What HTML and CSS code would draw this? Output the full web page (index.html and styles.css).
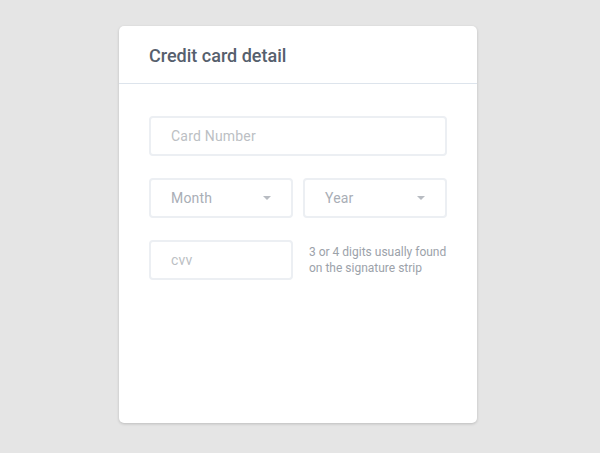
FILE: index.html
```html
<!DOCTYPE html>
<html>
<head>
<meta charset="utf-8">
<link rel="stylesheet" href="styles.css">
</head>
<body>
<div class="card">
  <div class="card-header">Credit card detail</div>
  <div class="card-body">
    <div class="field full light">Card Number</div>
    <div class="row">
      <div class="field select">Month<span class="caret"></span></div>
      <div class="field select">Year<span class="caret"></span></div>
    </div>
    <div class="row cvv-row">
      <div class="field half light">cvv</div>
      <div class="hint">3 or 4 digits usually found<br>on the signature strip</div>
    </div>
  </div>
</div>
</body>
</html>
```
FILE: styles.css
```css
html, body {
  margin: 0;
  padding: 0;
  background: #e5e5e5;
  font-family: Roboto, "Liberation Sans", sans-serif;
}
body {
  padding-top: 26px;
  height: 453px;
  box-sizing: border-box;
}
.card {
  width: 358px;
  height: 397px;
  margin: 0 auto 0 119px;
  background: #fff;
  border-radius: 5px;
  box-shadow: 0 1px 3px rgba(0,0,0,0.18);
  box-sizing: border-box;
}
.card-header {
  height: 58px;
  box-sizing: border-box;
  border-bottom: 1px solid #dde4ec;
  padding: 19px 30px 0;
  font-size: 18px;
  font-weight: 500;
  color: #56606d;
  line-height: 22px;
}
.card-body {
  padding: 32px 30px 0;
  display: flex;
  flex-direction: column;
  gap: 22px;
}
.field {
  height: 40px;
  box-sizing: border-box;
  border: 2px solid #eceff3;
  border-radius: 4px;
  padding: 0 20px;
  display: flex;
  align-items: center;
  font-size: 14px;
  letter-spacing: 0.2px;
  color: #a9aeb6;
}
.field.light {
  color: #bcbfc4;
}
.row {
  display: flex;
  gap: 10px;
}
.select {
  width: 144px;
  justify-content: space-between;
  padding-right: 20px;
}
.caret {
  width: 0;
  height: 0;
  border-left: 4.5px solid transparent;
  border-right: 4.5px solid transparent;
  border-top: 4px solid #b8bcc2;
}
.half {
  width: 144px;
}
.cvv-row {
  gap: 16px;
  align-items: center;
}
.hint {
  font-size: 12px;
  line-height: 16px;
  color: #9ca2aa;
}
```
